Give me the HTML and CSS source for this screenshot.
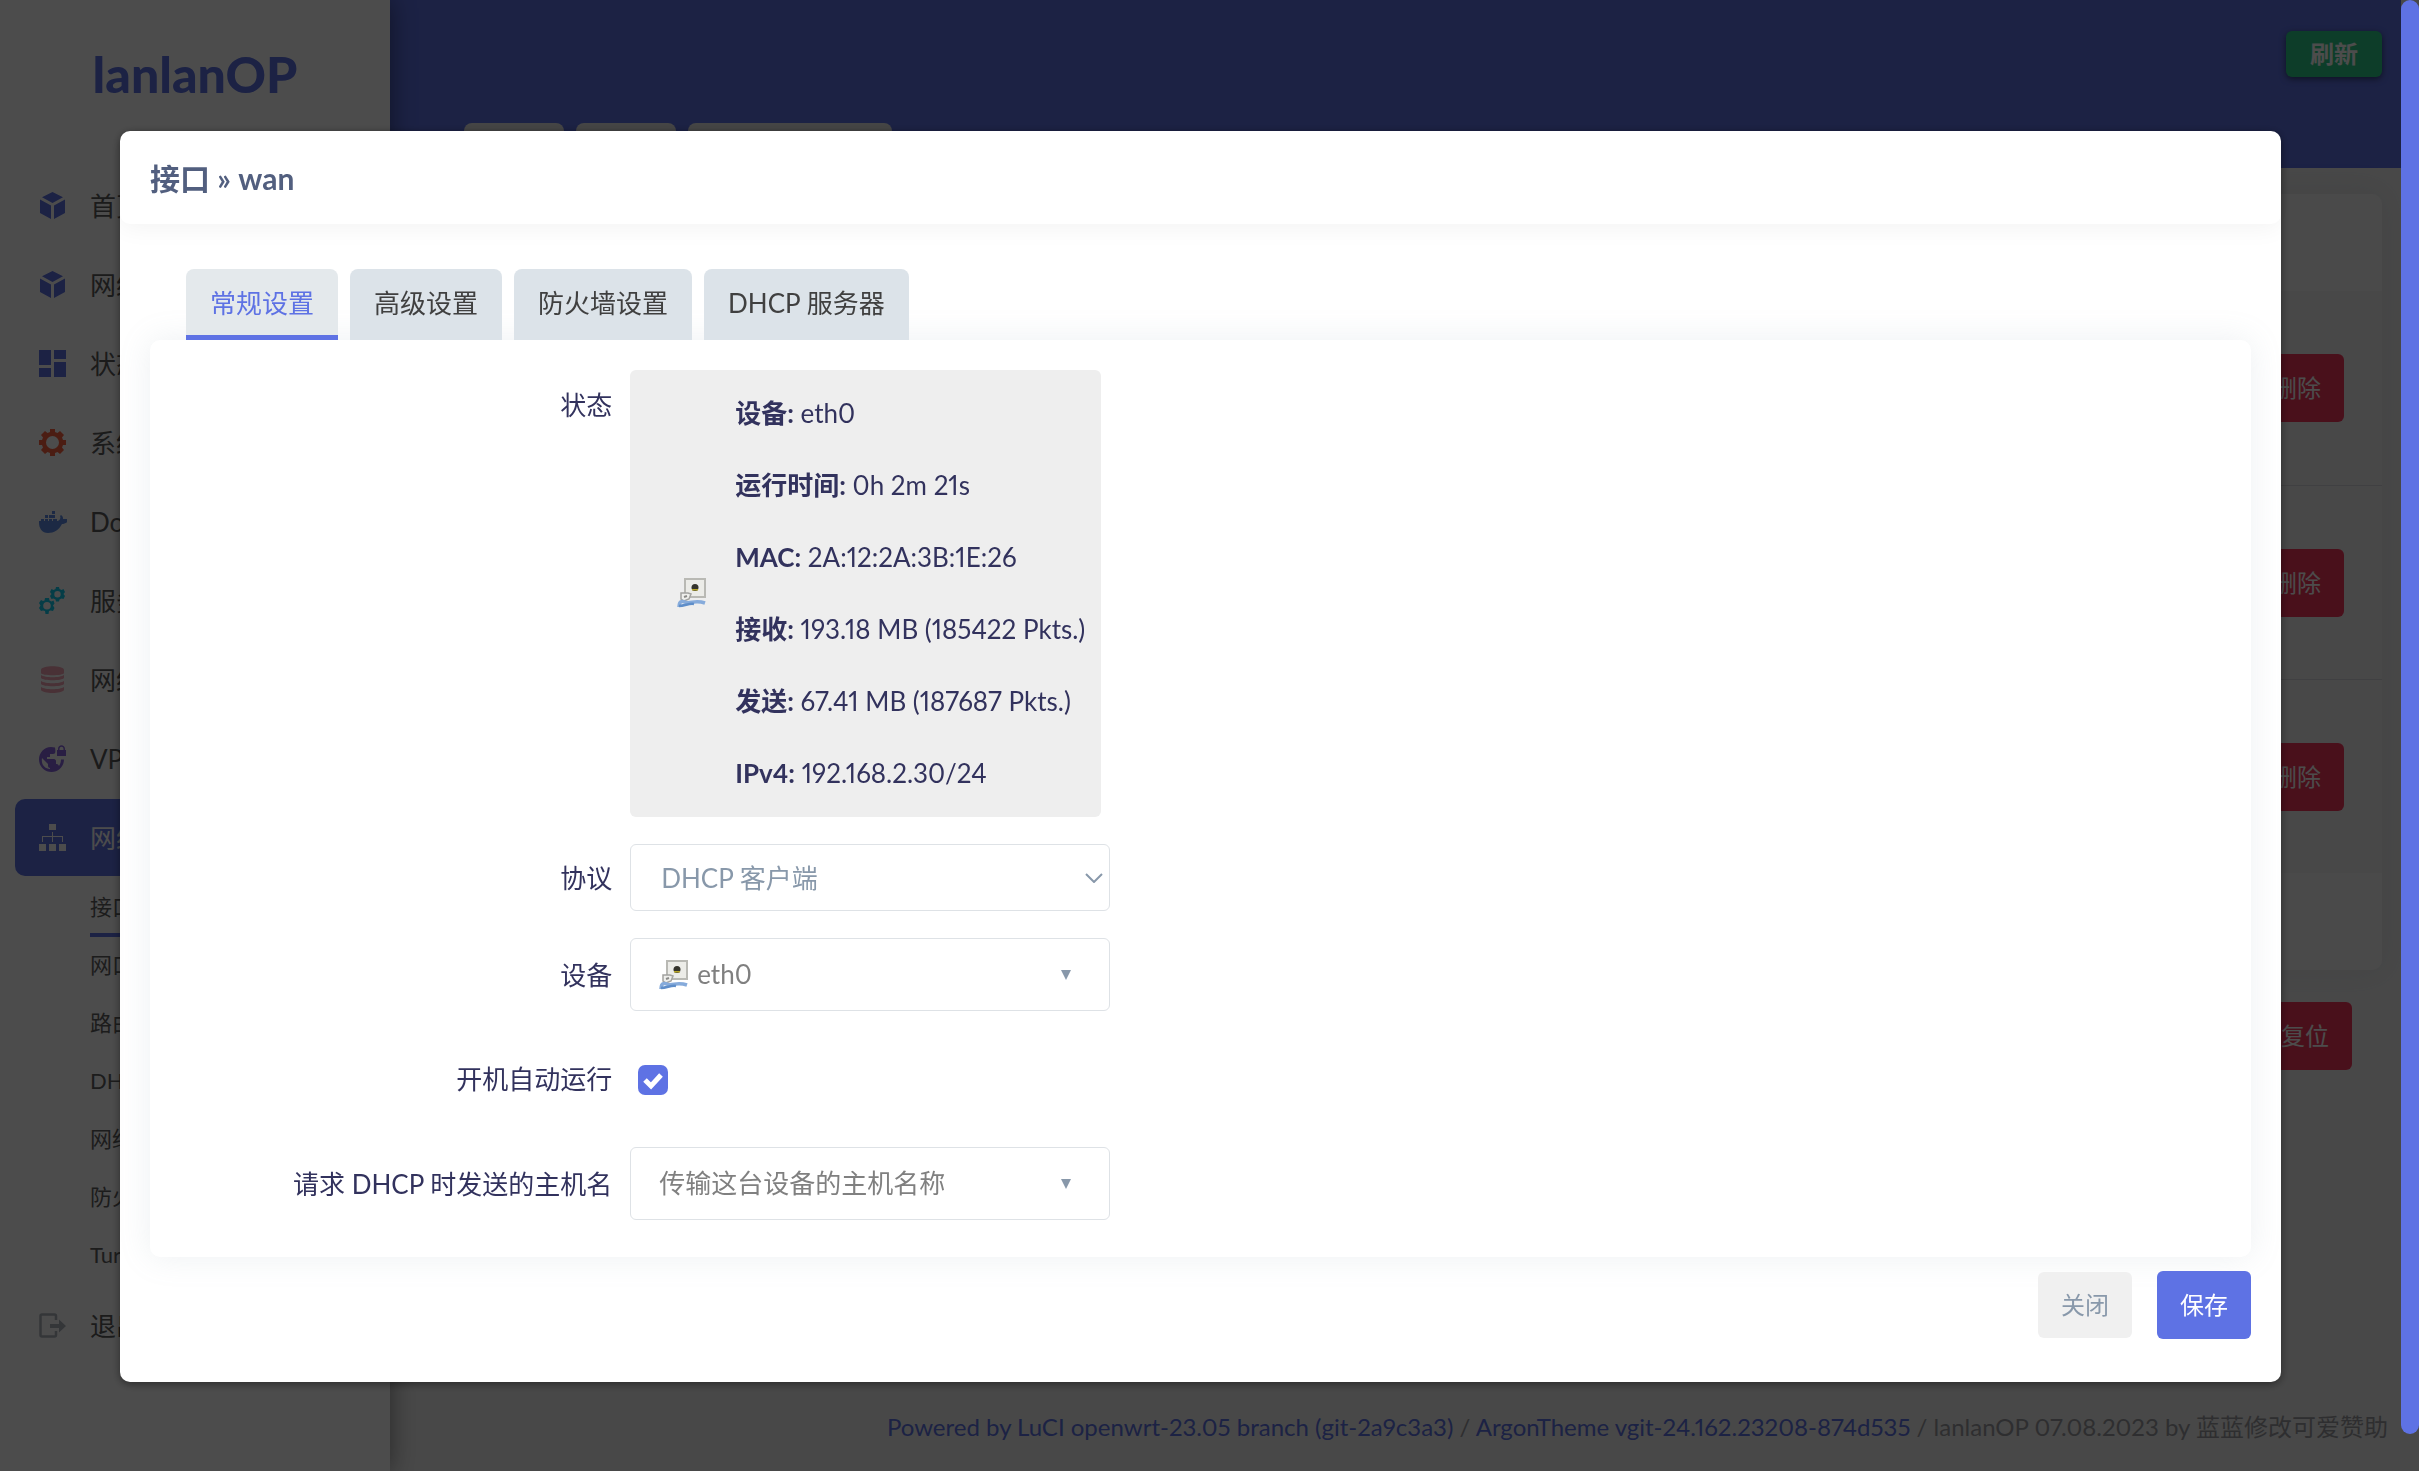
FILE: index.html
```html
<!DOCTYPE html>
<html lang="zh-CN">
<head>
<meta charset="utf-8">
<meta name="viewport" content="width=device-width, initial-scale=1">
<title>lanlanOP - 接口</title>
<link rel="stylesheet" href="styles.css">
</head>
<body>
<svg class="defs" aria-hidden="true">
  <symbol id="i-cube" viewBox="0 0 27 27">
    <path d="M13.500 0 24 5.200 13.500 11 3 5.200zM1 7.500 12 13.500V27L1 21zM26 7.500 15 13.500V27l11-6z"/>
  </symbol>
  <symbol id="i-socket" viewBox="0 0 30 30">
    <rect x="8" y="1" width="20" height="18" fill="#ecece8" stroke="#b9b9b4" stroke-width="2"/>
    <circle cx="18" cy="9.500" r="3.500" fill="#35342c"/>
    <path d="M15 11h6v1.500h-6z" fill="#b8a628"/>
    <path d="M4 15h7l3 1-2 5-5 2-3-2z" fill="#efefec" stroke="#a3a3a0" stroke-width="1.500"/>
    <path d="M7 19l3-1" stroke="#8b8b88" stroke-width="2" fill="none"/>
    <path d="M2 29c0-7 4-6 7-4.500 6 1 9-3 19 .5" fill="none" stroke="#86abdb" stroke-width="3.500"/>
    <path d="M2 28c6 0 10-3 15-2" fill="none" stroke="#5f8ec9" stroke-width="2.500"/>
  </symbol>
</svg>

<div class="layout">
  <aside class="sidebar">
    <a class="brand" href="#">lanlanOP</a>
    <nav>
      <ul class="menu">
        <li><a class="menu-item primary" href="#"><svg class="icon"><use href="#i-cube"/></svg>首页</a></li>
        <li><a class="menu-item primary" href="#"><svg class="icon"><use href="#i-cube"/></svg>网络向导</a></li>
        <li><a class="menu-item primary" href="#"><svg class="icon" viewBox="0 0 27 27"><path d="M0 0h12v15H0zM15 0h12v9H15zM0 18h12v9H0zM15 12h12v15H15z"/></svg>状态</a></li>
        <li><a class="menu-item orange" href="#"><svg class="icon" viewBox="0 0 27 27"><path fill-rule="evenodd" d="M11 0h5v3l2.500 1L21 2l4 4-2 2.500 1 2.500h3v5h-3l-1 2.500L25 21l-4 4-2.500-2-2.500 1v3h-5v-3l-2.500-1L6 25l-4-4 2-2.500L3 16H0v-5h3l1-2.500L2 6l4-4 2.500 2L11 3zM13.500 7a6.500 6.500 0 1 0 0 13 6.500 6.500 0 0 0 0-13z"/></svg>系统</a></li>
        <li><a class="menu-item docker" href="#"><svg class="icon wide" viewBox="0 0 28 27"><path d="M0 13h2v-2h3v2h1v-2h3v2h1v-2h3v2h1v-2h4v2h1c2-1 3-3 2-5l1-1c2 1 2 3 2 4h4l1 2c-1 2-4 3-6 3-3 6-8 9-14 9C3 25 0 20 0 15zM6 7h3v3H6zM10 7h3v3h-3zM13 7h3v3h-3zM13 3h3v3h-3z"/></svg>Docker</a></li>
        <li><a class="menu-item teal" href="#"><svg class="icon" viewBox="0 0 27 27"><path fill-rule="evenodd" d="M17 0h3l.5 2 2 1 2-1 1.500 3-1.500 2 1.500 2-1.500 3-2-.5-2 1-.5 2h-3l-.5-2-2-1-2 .5L11 9l1.500-2L11 5l1.500-3 2 1 2-1zM18.500 4a3.200 3.200 0 1 0 0 6.400 3.200 3.200 0 0 0 0-6.400zM6 11h4l.5 2.500 2 1 2-1 1 3L14 18.500l1.500 2.500-1.500 3-2.500-.5-1.500.5-.5 3h-3l-.5-3-2-.5L2 24l-2-3 1.500-2.500L0 16l2-3 2 1 1.500-.5zM8 15a3.800 3.800 0 1 0 0 7.600A3.800 3.800 0 0 0 8 15z"/></svg>服务</a></li>
        <li><a class="menu-item pink" href="#"><svg class="icon" viewBox="0 0 27 27"><path d="M2 4c0-5 23-5 23 0v3c0 3-23 3-23 0zM2 9c4 3 19 3 23 0v3c-2 3-21 3-23 0zM2 15c4 3 19 3 23 0v3c-2 3-21 3-23 0zM2 21c4 3 19 3 23 0v3c-2 4-21 4-23 0z"/></svg>网络存储</a></li>
        <li><a class="menu-item violet" href="#"><svg class="icon" viewBox="0 0 27 27"><path fill-rule="evenodd" d="M12 2C5 2 0 8 0 14.500S5 27 12.500 27 25 21 25 14.500h-3c0 3-1 5-2 6.500-1-2-2-2-3-2v-3c0-1-1-2-2-2H8v-2h3V9h3c2 0 3-1 2-6.500zM3 13l6 6v2c0 1 1 2 2 2v1C5 23.500 2 19 3 13z"/><path d="M18 5h1V4c0-5 7-5 7 0v1h1v6h-9zM20.500 5h4V4c0-3-4-3-4 0z" fill-rule="evenodd"/></svg>VPN</a></li>
        <li>
          <a class="menu-item active" href="#"><svg class="icon" viewBox="0 0 27 27"><path d="M10 0h7v6h-7zM0 20h7v7H0zM10 20h7v7h-7zM20 20h7v7h-7zM13 8h1v4h10v6h-1v-5h-9v5h-1v-5H4v5H3v-6h10z"/></svg>网络</a>
          <ul class="submenu">
            <li><a class="current" href="#">接口</a></li>
            <li><a href="#">网口配置</a></li>
            <li><a href="#">路由</a></li>
            <li><a href="#">DHCP/DNS</a></li>
            <li><a href="#">网络诊断</a></li>
            <li><a href="#">防火墙</a></li>
            <li><a href="#">Turbo ACC</a></li>
          </ul>
        </li>
        <li><a class="menu-item grey" href="#"><svg class="icon" viewBox="0 0 27 27"><path fill="none" stroke="currentColor" stroke-width="2.500" d="M17 8V4q0-1.500-1.500-1.500H3Q1.500 2.500 1.500 4v19q0 1.500 1.500 1.500h12.500q1.500 0 1.500-1.500v-4"/><path d="M11 12h9V7.500l7 6.500-7 6.500V16h-9z"/></svg>退出</a></li>
      </ul>
    </nav>
  </aside>

  <main class="main">
    <header class="topbar">
      <button class="refresh" type="button">刷新</button>
      <div class="page-tabs"><a href="#">接口</a><a href="#">设备</a><a href="#">全局网络选项</a></div>
    </header>
    <section class="cards">
      <div class="card-head"></div>
      <div class="card-row"><button class="btn danger" type="button">删除</button></div>
      <div class="card-row"><button class="btn danger" type="button">删除</button></div>
      <div class="card-row"><button class="btn danger" type="button">删除</button></div>
      <div class="card-foot"></div>
    </section>
    <div class="page-actions"><button class="btn danger" type="button">复位</button></div>
    <footer class="footer"><a href="#">Powered by LuCI openwrt-23.05 branch (git-2a9c3a3)</a> / <a href="#">ArgonTheme vgit-24.162.23208-874d535</a> / lanlanOP 07.08.2023 by 蓝蓝修改可爱赞助</footer>
  </main>
</div>

<div class="overlay">
  <div class="modal" role="dialog" aria-modal="true" aria-labelledby="modal-title">
    <h4 class="modal-title" id="modal-title">接口 » wan</h4>
    <div class="modal-body">
      <div class="tabs" role="tablist">
        <button class="tab selected" type="button" role="tab" aria-selected="true">常规设置</button>
        <button class="tab" type="button" role="tab">高级设置</button>
        <button class="tab" type="button" role="tab">防火墙设置</button>
        <button class="tab" type="button" role="tab">DHCP 服务器</button>
      </div>
      <form class="panel" id="iface">
        <div class="field status-field">
          <span class="label">状态</span>
          <div class="status">
            <svg class="socket"><use href="#i-socket"/></svg>
            <div class="status-lines">
              <p><strong>设备:</strong> eth0</p>
              <p><strong>运行时间:</strong> 0h 2m 21s</p>
              <p><strong>MAC:</strong> 2A:12:2A:3B:1E:26</p>
              <p><strong>接收:</strong> 193.18 MB (185422 Pkts.)</p>
              <p><strong>发送:</strong> 67.41 MB (187687 Pkts.)</p>
              <p><strong>IPv4:</strong> 192.168.2.30/24</p>
            </div>
          </div>
        </div>
        <div class="field">
          <label class="label" for="proto">协议</label>
          <div class="select">
            <select id="proto"><option>DHCP 客户端</option></select>
            <svg class="chevron" viewBox="0 0 18 10"><path d="M1 1l8 8 8-8"/></svg>
          </div>
        </div>
        <div class="field">
          <label class="label" for="device">设备</label>
          <div class="select combo with-icon">
            <svg class="socket"><use href="#i-socket"/></svg>
            <select id="device"><option>eth0</option></select>
            <svg class="caret" viewBox="0 0 10 10"><path d="M0 0h10L5 10z"/></svg>
          </div>
        </div>
        <div class="field check-field">
          <label class="label" for="auto">开机自动运行</label>
          <input class="check" id="auto" type="checkbox" checked>
        </div>
        <div class="field">
          <label class="label" for="host">请求 DHCP 时发送的主机名</label>
          <div class="select combo">
            <select id="host"><option>传输这台设备的主机名称</option></select>
            <svg class="caret" viewBox="0 0 10 10"><path d="M0 0h10L5 10z"/></svg>
          </div>
        </div>
      </form>
      <div class="modal-actions">
        <button class="btn neutral" type="button">关闭</button>
        <button class="btn save" type="submit" form="iface">保存</button>
      </div>
    </div>
  </div>
</div>
<div class="scroll-thumb"></div>
</body>
</html>
```
FILE: styles.css
```css
:root {
  --primary: #5e72e4;
  --danger: #f5365c;
  --ink: #32325d;
  --muted: #8898aa;
  --gutter: 18px;
}

* { box-sizing: border-box; }

body {
  margin: 0;
  background: #f1f1f1;
  color: var(--ink);
  font: 26px/36px Lato, "Noto Sans CJK SC", sans-serif;
  font-variant-numeric: proportional-nums;
}

ul, p, h4 { margin: 0; padding: 0; }
li { list-style: none; }
a { color: inherit; text-decoration: none; }
button, select { font: inherit; color: inherit; border: 0; cursor: pointer; }
.defs { position: absolute; width: 0; height: 0; }

/* page behind the dialog */
.layout { display: flex; min-height: 100vh; padding-right: var(--gutter); }

.sidebar {
  flex: 0 0 390px;
  background: #fff;
  box-shadow: 0 0 24px rgba(0, 0, 0, .45);
  z-index: 1;
}

.brand {
  display: flex;
  align-items: center;
  justify-content: center;
  height: 167px;
  padding-bottom: 20px;
  color: var(--primary);
  font: 900 50px/60px Lato, sans-serif;
}

.menu { display: flex; flex-direction: column; gap: 2px; padding: 0 15px; }
.menu-item {
  display: flex;
  align-items: center;
  gap: 24px;
  height: 77px;
  padding-left: 24px;
  border-radius: 10px;
  color: #5a5a5a;
}
.icon { flex: none; width: 27px; height: 27px; fill: currentColor; }
.wide { width: 28px; margin-right: -1px; }
.primary .icon { color: var(--primary); }
.orange .icon { color: #fb6340; }
.docker .icon { color: #5e8be4; }
.teal .icon { color: #11cdef; }
.pink .icon { color: #f3a4b5; }
.violet .icon { color: #8965e0; }
.grey .icon { color: #adb5bd; }
.menu-item.active { background: var(--primary); color: #fff; }

.submenu { padding: 3px 0 0 75px; font-size: 22px; }
.submenu a { display: block; height: 58px; line-height: 56px; color: #606060; }
.submenu .current { border-bottom: 4px solid var(--primary); }

.main { flex: 1; min-width: 0; display: flex; flex-direction: column; }
.topbar {
  display: flex;
  flex-direction: column;
  justify-content: space-between;
  height: 168px;
  padding-top: 31px;
  background: var(--primary);
}
.refresh {
  align-self: flex-end;
  width: 96px;
  height: 46px;
  margin-right: 19px;
  border-radius: 6px;
  background: #2dce89;
  box-shadow: 0 2px 6px rgba(0, 0, 0, .5);
  color: #fff;
  font-size: 24px;
  font-weight: 700;
}
.page-tabs { display: flex; gap: 12px; margin-left: 74px; }
.page-tabs a {
  height: 45px;
  padding: 9px 24px 0;
  border-radius: 8px 8px 0 0;
  background: #e8e8e8;
}

.cards { margin: 26px 19px 32px 30px; border-radius: 10px; box-shadow: 0 0 32px rgba(136, 152, 170, .15); }
.card-head, .card-foot { height: 97px; background: #f8f8f8; }
.card-head { border-radius: 10px 10px 0 0; }
.card-foot { border-radius: 0 0 10px 10px; }
.card-row {
  display: flex;
  align-items: center;
  justify-content: flex-end;
  height: 194px;
  padding-right: 38px;
}
.card-row + .card-row { border-top: 1px solid #d8d8dc; }

.btn {
  height: 68px;
  padding: 0 23px;
  border-radius: 6px;
  font-size: 24px;
}
.danger { background: var(--danger); color: #fff; }
.page-actions { display: flex; justify-content: flex-end; padding-right: 49px; }

.footer { margin-top: auto; padding: 26px 13px; text-align: right; font-size: 24px; color: #9c9ca0; }
.footer a { color: var(--primary); }

/* dialog */
.overlay {
  position: fixed;
  inset: 0;
  z-index: 2;
  padding-right: var(--gutter);
  background: rgba(0, 0, 0, .7);
}
.modal {
  width: 90%;
  margin: 131px auto 0;
  border-radius: 10px;
  background: #fff;
  box-shadow: 0 2px 8px rgba(0, 0, 0, .45);
}
.modal-title {
  padding: 27px 30px 26px;
  border-radius: 10px;
  box-shadow: 0 4px 24px rgba(0, 0, 0, .05);
  color: #525f7f;
  font-size: 30px;
  line-height: 40px;
}
.modal-body { padding: 45px 30px 43px; }

.tabs { display: flex; gap: 12px; padding-left: 36px; }
.tab {
  height: 71px;
  padding: 0 24px 3px;
  border-radius: 8px 8px 0 0;
  background: #dce3e9;
  color: #404040;
}
.tab.selected { padding-top: 2px; padding-bottom: 0; border-bottom: 5px solid var(--primary); background: #e4e9ec; color: var(--primary); }

.panel {
  display: flex;
  flex-direction: column;
  gap: 27px;
  padding: 30px 0 37px;
  border-radius: 10px;
  background: #fff;
  box-shadow: 0 0 32px rgba(136, 152, 170, .15);
}
.field { display: grid; grid-template-columns: 22% 480px; column-gap: 18px; align-items: center; }
.label { text-align: right; }
.status-field { align-items: start; }
.status-field .label { padding-top: 17px; }

.status {
  display: flex;
  align-items: center;
  justify-self: start;
  gap: 28px;
  width: 471px;
  padding: 7px 0 8px 47px;
  border-radius: 6px;
  background: #eee;
}
.socket { flex: none; width: 30px; height: 30px; }
.status-lines p { line-height: 72px; white-space: nowrap; }

.select { display: flex; align-items: center; position: relative; }
.select select {
  appearance: none;
  width: 100%;
  height: 67px;
  padding: 0 30px;
  border: 1px solid #dee2e6;
  border-radius: 6px;
  background: #fff;
  color: var(--muted);
}
.select.combo select { height: 73px; padding: 0 28px 2px; color: #808080; }
.select.with-icon select { padding-left: 66px; }
.with-icon .socket { position: absolute; left: 29px; }
.chevron { position: absolute; right: 7px; width: 18px; height: 10px; fill: none; stroke: var(--muted); stroke-width: 2; }
.caret { position: absolute; right: 39px; width: 10px; height: 10px; fill: var(--muted); }

.check-field { height: 82px; }
.check {
  appearance: none;
  width: 30px;
  height: 30px;
  margin: 1px 8px 0;
  border-radius: 7px;
  background: var(--primary) url("data:image/svg+xml,%3Csvg xmlns='http://www.w3.org/2000/svg' viewBox='0 0 30 30'%3E%3Cpath d='M7 15l6 6 10-11' fill='none' stroke='%23fff' stroke-width='5'/%3E%3C/svg%3E") center / contain;
}

.modal-actions { display: flex; justify-content: flex-end; align-items: center; gap: 25px; padding-top: 14px; }
.neutral { height: 66px; background: #f0f0f0; color: var(--muted); }
.save { background: var(--primary); color: #fff; }

.scroll-thumb {
  position: fixed;
  top: 0;
  right: 0;
  z-index: 3;
  width: var(--gutter);
  height: 97.5%;
  border-radius: 9px;
  background: var(--primary);
}
```
